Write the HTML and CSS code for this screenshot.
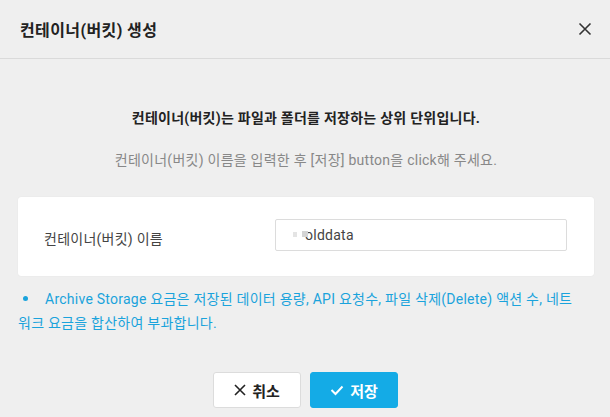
FILE: index.html
```html
<!DOCTYPE html>
<html lang="ko">

<head>
    <meta charset="UTF-8">
    <meta name="viewport" content="width=device-width, initial-scale=1.0">
    <title>컨테이너(버킷) 생성</title>
    <link rel="stylesheet" href="styles.css">
</head>

<body>

    <div class="modal-header">
        <h1 class="modal-title">컨테이너(버킷) 생성</h1>
        <button class="close-button" aria-label="닫기">
            <svg width="14" height="14" viewBox="0 0 14 14">
                <path d="M1.5 1.5 L12.5 12.5 M12.5 1.5 L1.5 12.5" stroke="#333" stroke-width="1.6" fill="none"/>
            </svg>
        </button>
    </div>

    <div class="modal-body">
        <p class="lead">컨테이너(버킷)는 파일과 폴더를 저장하는 상위 단위입니다.</p>
        <p class="guide">컨테이너(버킷) 이름을 입력한 후 [저장] button을 click해 주세요.</p>

        <!-- 입력 폼 -->
        <div class="form-box">
            <label class="form-label" for="bucketName">컨테이너(버킷) 이름</label>
            <div class="input-wrap">
                <span class="mask mask-a"></span><span class="mask mask-b"></span>
                <input type="text" id="bucketName" class="name-input" value="olddata">
            </div>
        </div>

        <ul class="notice">
            <li>Archive Storage 요금은 저장된 데이터 용량, API 요청수, 파일 삭제(Delete) 액션 수, 네트워크 요금을 합산하여 부과합니다.</li>
        </ul>
    </div>

    <div class="modal-footer">
        <button class="btn btn-cancel">
            <svg width="12" height="12" viewBox="0 0 12 12">
                <path d="M1 1 L11 11 M11 1 L1 11" stroke="#222" stroke-width="1.6" fill="none"/>
            </svg>
            취소
        </button>
        <button class="btn btn-save">
            <svg width="14" height="12" viewBox="0 0 14 12">
                <path d="M1.5 6 L5.5 10 L12.5 2.5" stroke="#fff" stroke-width="2" fill="none"/>
            </svg>
            저장
        </button>
    </div>

</body>

</html>
```

FILE: styles.css
```css
body {
    margin: 0;
    background-color: #efefef;
    font-family: Roboto, "Noto Sans CJK KR", sans-serif;
    letter-spacing: 0.25px;
    color: #222;
}

/* 헤더 */
.modal-header {
    height: 58px;
    display: flex;
    align-items: center;
    justify-content: space-between;
    padding: 0 18px 0 20px;
    border-bottom: 1px solid #dadada;
}

.modal-title {
    margin: 0;
    font-size: 16px;
    font-weight: bold;
    letter-spacing: 0.4px;
    color: #222;
}

.close-button {
    background: none;
    border: none;
    padding: 0;
    width: 14px;
    height: 14px;
    display: flex;
    cursor: pointer;
}

/* 본문 */
.modal-body {
    padding: 0 16px 0 18px;
}

.lead {
    margin: 49px 0 0;
    text-align: center;
    font-size: 14px;
    font-weight: bold;
    line-height: 20px;
    color: #222;
}

.guide {
    margin: 22px 0 0;
    text-align: center;
    font-size: 14px;
    line-height: 20px;
    color: #888;
}

.form-box {
    margin-top: 27px;
    height: 79px;
    background-color: #fff;
    border-radius: 3px;
    box-shadow: 0 0 1px #d8d8d8;
    display: flex;
    align-items: center;
    padding: 0 27px 0 26px;
}

.form-label {
    width: 231px;
    font-size: 14px;
    color: #444;
    padding-top: 2px;
}

.input-wrap {
    flex: 1;
    position: relative;
    margin-top: -3px;
}

.name-input {
    width: 100%;
    height: 32px;
    box-sizing: border-box;
    border: 1px solid #dcdcdc;
    border-radius: 2px;
    padding: 0 0 0 29px;
    font-family: Roboto, "Noto Sans CJK KR", sans-serif;
    font-size: 14px;
    letter-spacing: 0.25px;
    color: #444;
    outline: none;
}

.mask {
    position: absolute;
    background-color: #e4e4e4;
    height: 5px;
}

.mask-a {
    left: 18px;
    top: 13px;
    width: 4px;
}

.mask-b {
    left: 27px;
    top: 12px;
    width: 6px;
    height: 6px;
    background-color: #d4d4d4;
}

.notice {
    margin: 11px 0 0;
    padding: 0 15px 0 0;
    list-style: none;
    font-size: 14px;
    line-height: 24px;
    color: #1aa3dc;
}

.notice li::before {
    content: "";
    display: inline-block;
    width: 5px;
    height: 5px;
    border-radius: 50%;
    background-color: #1aa3dc;
    margin: 0 17px 3px 5px;
}

/* 하단 버튼 */
.modal-footer {
    display: flex;
    justify-content: center;
    gap: 9px;
    margin-top: 37px;
    padding-left: 1px;
}

.btn {
    width: 88px;
    height: 36px;
    border-radius: 3px;
    font-family: Roboto, "Noto Sans CJK KR", sans-serif;
    font-size: 15px;
    font-weight: bold;
    display: flex;
    align-items: center;
    justify-content: center;
    gap: 6px;
    cursor: pointer;
}

.btn-cancel {
    background-color: #fff;
    border: 1px solid #dcdcdc;
    color: #222;
}

.btn-save {
    background-color: #14abe6;
    border: 1px solid #14abe6;
    color: #fff;
}
```
